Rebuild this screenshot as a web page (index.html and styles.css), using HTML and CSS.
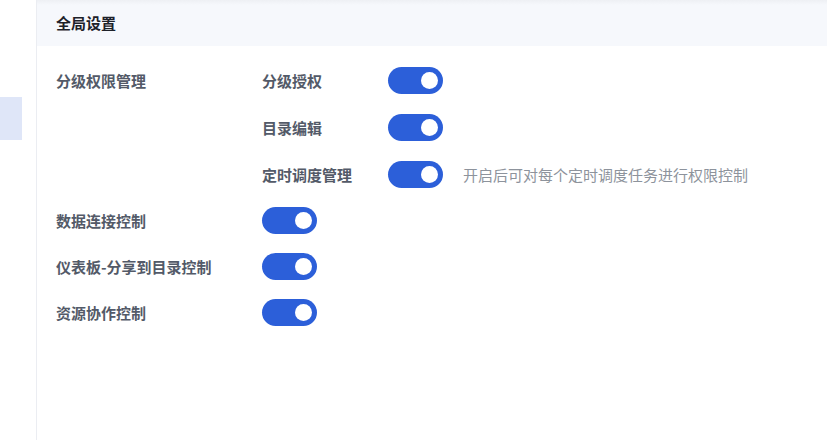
FILE: index.html
```html
<!DOCTYPE html>
<html lang="zh-CN">
<head>
  <meta charset="UTF-8">
  <meta name="viewport" content="width=device-width, initial-scale=1.0">
  <title>全局设置</title>
  <link rel="stylesheet" href="styles.css">
</head>
<body>

  <div class="layout">
    <aside class="sidebar">
      <div class="sidebar-item active"></div>
    </aside>

    <main class="main">
      <div class="header">全局设置</div>

      <div class="content">
        <div class="group">
          <div class="label">分级权限管理</div>
          <div class="sub-list">
            <div class="sub-row">
              <div class="sub-label">分级授权</div>
              <span class="switch"><span class="knob"></span></span>
            </div>
            <div class="sub-row">
              <div class="sub-label">目录编辑</div>
              <span class="switch"><span class="knob"></span></span>
            </div>
            <div class="sub-row">
              <div class="sub-label">定时调度管理</div>
              <span class="switch"><span class="knob"></span></span>
              <span class="hint">开启后可对每个定时调度任务进行权限控制</span>
            </div>
          </div>
        </div>

        <div class="row">
          <div class="label">数据连接控制</div>
          <span class="switch"><span class="knob"></span></span>
        </div>
        <div class="row">
          <div class="label">仪表板-分享到目录控制</div>
          <span class="switch"><span class="knob"></span></span>
        </div>
        <div class="row">
          <div class="label">资源协作控制</div>
          <span class="switch"><span class="knob"></span></span>
        </div>
      </div>
    </main>
  </div>

</body>
</html>
```

FILE: styles.css
```css
body {
  margin: 0;
  font-family: "Noto Sans CJK SC", "Noto Sans", sans-serif;
  font-size: 15px;
  background-color: #fff;
}

.layout {
  display: flex;
  height: 440px;
}

.sidebar {
  width: 36px;
  border-right: 1px solid #ebedf2;
  padding-top: 97px;
}

.sidebar-item {
  width: 22px;
  height: 43px;
}

.sidebar-item.active {
  background-color: #dfe6f8;
}

.main {
  flex: 1;
}

.header {
  height: 46px;
  line-height: 46px;
  padding-left: 19px;
  background: linear-gradient(to bottom, #eef0f4 0, #f6f8fc 5px, #f6f8fc 100%);
  color: #1d2129;
  font-weight: bold;
}

.content {
  padding: 21px 0 0 19px;
  display: flex;
  flex-direction: column;
  gap: 19px;
}

.group {
  display: flex;
}

.label {
  width: 206px;
  color: #535a68;
  font-weight: bold;
  line-height: 27px;
}

.sub-list {
  display: flex;
  flex-direction: column;
  gap: 20px;
}

.sub-row,
.row {
  display: flex;
  align-items: center;
  height: 27px;
}

.sub-label {
  width: 126px;
  color: #535a68;
  font-weight: bold;
}

.switch {
  position: relative;
  display: inline-block;
  width: 55px;
  height: 27px;
  border-radius: 14px;
  background-color: #2c5fd9;
}

.knob {
  position: absolute;
  top: 5px;
  right: 5px;
  width: 17px;
  height: 17px;
  border-radius: 50%;
  background-color: #fff;
}

.hint {
  margin-left: 20px;
  color: #8d939c;
  font-size: 15px;
}
```
